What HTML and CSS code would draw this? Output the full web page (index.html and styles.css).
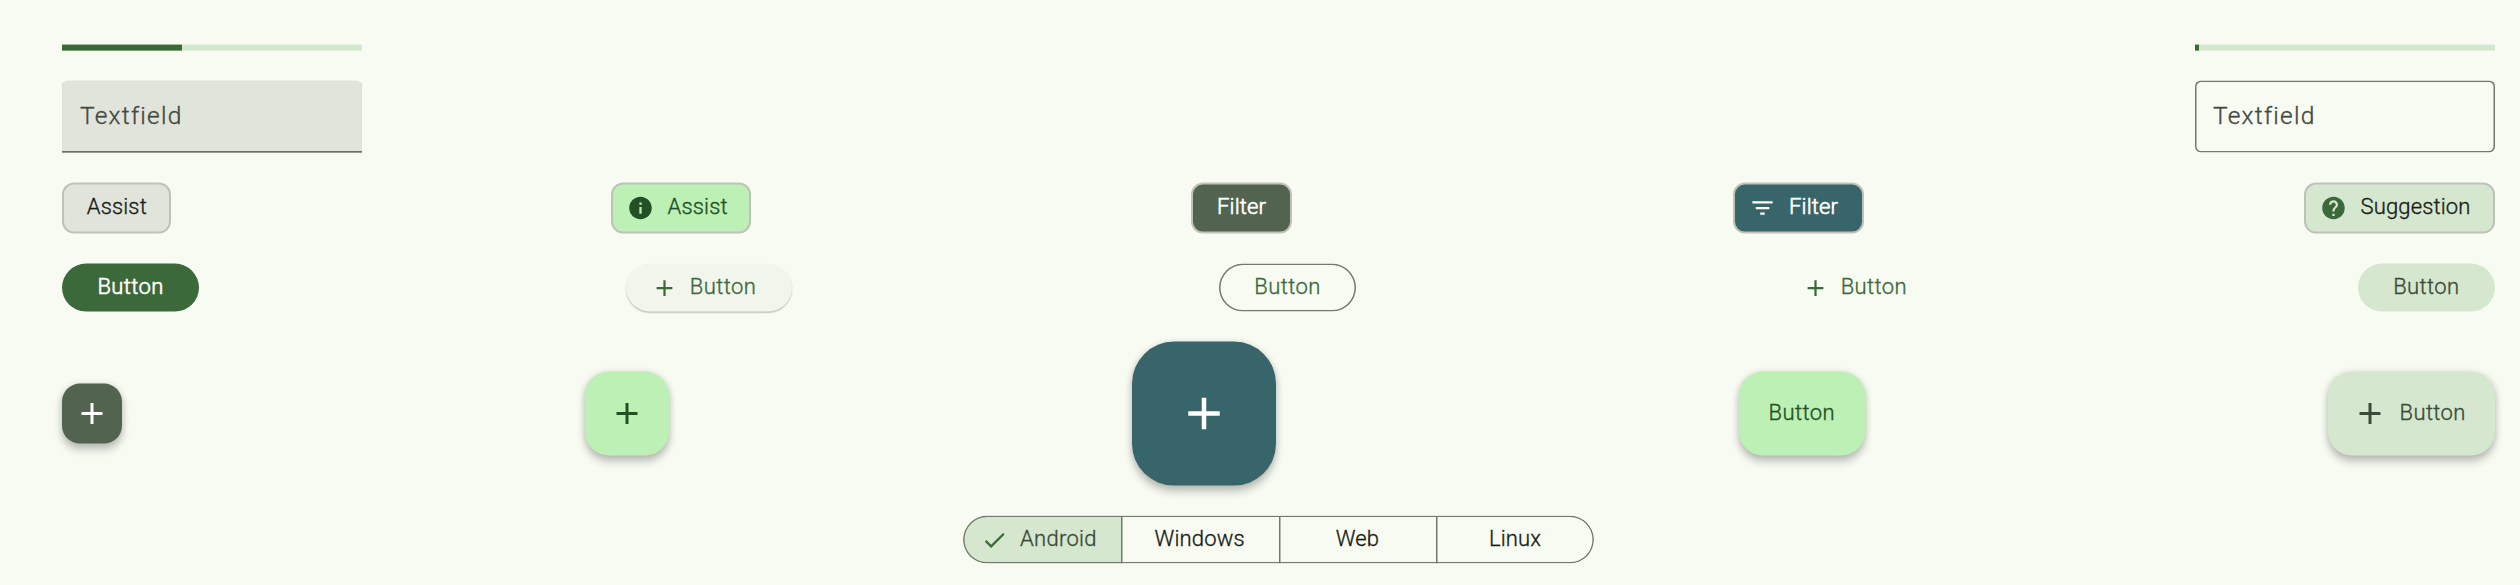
FILE: index.html
```html
<!DOCTYPE html>
<html lang="en">
<head>
<meta charset="utf-8">
<title>Components</title>
<link rel="stylesheet" href="styles.css">
</head>
<body>
<svg class="defs" width="0" height="0">
  <symbol id="add" viewBox="0 0 24 24"><path d="M19 13h-6v6h-2v-6H5v-2h6V5h2v6h6v2z"/></symbol>
  <symbol id="info" viewBox="0 0 24 24"><path d="M12 2C6.48 2 2 6.48 2 12s4.48 10 10 10 10-4.48 10-10S17.52 2 12 2zm1 15h-2v-6h2v6zm0-8h-2V7h2v2z"/></symbol>
  <symbol id="help" viewBox="0 0 24 24"><path d="M12 2C6.48 2 2 6.48 2 12s4.48 10 10 10 10-4.48 10-10S17.52 2 12 2zm1 17h-2v-2h2v2zm2.07-7.75l-.9.92C13.45 12.9 13 13.5 13 15h-2v-.5c0-1.1.45-2.1 1.17-2.83l1.24-1.26c.37-.36.59-.86.59-1.41 0-1.1-.9-2-2-2s-2 .9-2 2H8c0-2.21 1.79-4 4-4s4 1.79 4 4c0 .88-.36 1.68-.93 2.25z"/></symbol>
  <symbol id="filter" viewBox="0 0 24 24"><path d="M10 18h4v-2h-4v2zM3 6v2h18V6H3zm3 7h12v-2H6v2z"/></symbol>
  <symbol id="check" viewBox="0 0 24 24"><path d="M9 16.17L4.83 12l-1.42 1.41L9 19 21 7l-1.41-1.41z"/></symbol>
</svg>
<main class="page">
  <div class="row">
    <div class="progress"><div class="bar" style="width:40%"></div></div>
    <div class="progress"><div class="bar" style="width:1.2%"></div></div>
  </div>
  <div class="row">
    <div class="field filled"><span>Textfield</span></div>
    <div class="field outlined"><span>Textfield</span></div>
  </div>
  <div class="row">
    <div class="chip c1"><span>Assist</span></div>
    <div class="chip icon c2"><svg><use href="#info"/></svg><span>Assist</span></div>
    <div class="chip c3"><span>Filter</span></div>
    <div class="chip icon c4"><svg><use href="#filter"/></svg><span>Filter</span></div>
    <div class="chip icon c5"><svg><use href="#help"/></svg><span>Suggestion</span></div>
  </div>
  <div class="row">
    <div class="btn primary"><span>Button</span></div>
    <div class="btn elevated"><svg><use href="#add"/></svg><span>Button</span></div>
    <div class="btn stroked"><span>Button</span></div>
    <div class="btn text"><svg><use href="#add"/></svg><span>Button</span></div>
    <div class="btn tonal"><span>Button</span></div>
  </div>
  <div class="row fabs">
    <div class="fab small"><svg><use href="#add"/></svg></div>
    <div class="fab regular"><svg><use href="#add"/></svg></div>
    <div class="fab large"><svg><use href="#add"/></svg></div>
    <div class="fab label"><span>Button</span></div>
    <div class="fab extended"><svg><use href="#add"/></svg><span>Button</span></div>
  </div>
  <div class="segments">
    <div class="segment selected"><svg><use href="#check"/></svg><span>Android</span></div>
    <div class="segment"><span>Windows</span></div>
    <div class="segment"><span>Web</span></div>
    <div class="segment"><span>Linux</span></div>
  </div>
</main>
</body>
</html>
```
FILE: styles.css
```css
* { box-sizing: border-box; }
body {
  margin: 0;
  height: 585px;
  overflow: hidden;
  background: #f8fbf2;
  color: #191d17;
  font: 300 22px/30px Roboto, sans-serif;
  letter-spacing: 0.15px;
}
.defs { display: block; }
svg { fill: currentColor; flex: none; }
span { -webkit-text-stroke: 0.35px currentColor; }
.page {
  display: flex;
  flex-direction: column;
  gap: 30px;
  padding: 44px 25px 0 62px;
  transform: translateY(0.6px);
}
.row { display: flex; justify-content: space-between; align-items: center; }
.progress { width: 300px; height: 6px; background: #d5e8cf; }
.bar { height: 6px; background: #3b6939; }

.field {
  width: 300px;
  height: 72px;
  display: flex;
  align-items: center;
  padding: 0 0 2px 18px;
  font-size: 24.5px;
  letter-spacing: 1.25px;
  color: #424940;
}
.filled {
  background: #e1e4db;
  border-radius: 6px 6px 0 0;
  box-shadow: inset 0 -1.6px 0 #6b6f68, 0 0.4px 0 #6b6f68;
}
.outlined { box-shadow: inset 0 0 0 1.5px #72796f; border-radius: 6px; }

.chip {
  height: 51px;
  display: flex;
  align-items: center;
  justify-content: center;
  border: 2px solid #bdc3b8;
  border-radius: 12px;
}
.chip span { position: relative; top: -2px; }
.chip svg { width: 27px; height: 27px; margin-right: 13.5px; }
.chip.icon { justify-content: flex-start; padding-left: 14px; }
.c1 { width: 108.6px; padding-left: 1px; background: #e1e4db; }
.c2 { width: 139.6px; background: #bcf0b4; color: #235024; }
.c3 { width: 101px; background: #52634f; color: #fff; }
.c4 { width: 131px; background: #38656a; color: #fff; }
.c5 { width: 191px; background: #d5e8cf; }
.c5 svg { color: #3b6939; }
.c3 span, .c4 span, .primary span { -webkit-text-stroke-width: 0.6px; }

.btn {
  width: 137.3px;
  height: 48px;
  display: flex;
  align-items: center;
  justify-content: center;
  border-radius: 24px;
  color: #3b6939;
}
.btn, .fab { letter-spacing: 0.4px; }
.btn span, .fab span, .segment span { position: relative; top: -1px; }
.btn svg { width: 27px; height: 27px; margin-right: 12px; }
.primary { background: #3b6939; color: #fff; }
.elevated {
  width: 165.5px;
  justify-content: flex-start;
  padding-left: 24.5px;
  background: #f2f5ec;
  box-shadow: 0 1.5px 1.5px rgba(0, 0, 0, 0.22);
}
.stroked { box-shadow: inset 0 0 0 1.5px #72796f; }
.text { width: 147.5px; justify-content: flex-start; padding-left: 18.5px; }
.tonal { background: #d5e8cf; color: #3b4b38; }

.fabs { height: 144px; }
.fab {
  height: 84px;
  display: flex;
  align-items: center;
  justify-content: center;
  border-radius: 24px;
  box-shadow: 0 6px 9px rgba(0, 0, 0, 0.2), 0 1px 7px rgba(0, 0, 0, 0.12);
}
.fab svg { width: 36px; height: 36px; }
.small { width: 60px; height: 60px; border-radius: 18px; background: #52634f; color: #fff; }
.regular { width: 84px; background: #bcf0b4; color: #235024; }
.large { width: 144px; height: 144px; border-radius: 42px; background: #38656a; color: #fff; }
.large svg { width: 54px; height: 54px; }
.label { width: 125.5px; background: #bcf0b4; color: #235024; }
.extended { width: 167.5px; justify-content: flex-start; padding-left: 24px; background: #d5e8cf; color: #3b4b38; }
.extended svg { margin-right: 12px; }

.segments {
  position: relative;
  align-self: center;
  display: flex;
  width: 631px;
  height: 48px;
  border-radius: 24px;
  overflow: hidden;
}
.segments::after {
  content: "";
  position: absolute;
  inset: 0;
  border-radius: 24px;
  box-shadow: inset 0 0 0 1.5px #72796f;
}
.segment {
  width: 25%;
  display: flex;
  align-items: center;
  justify-content: center;
}
.segment + .segment { box-shadow: inset 1.5px 0 0 #72796f; }
.selected { justify-content: flex-start; padding-left: 18px; background: #d5e8cf; color: #3b4b38; letter-spacing: 0.3px; }
.selected svg { width: 27px; height: 27px; margin-right: 12px; color: #3b6939; }
```
